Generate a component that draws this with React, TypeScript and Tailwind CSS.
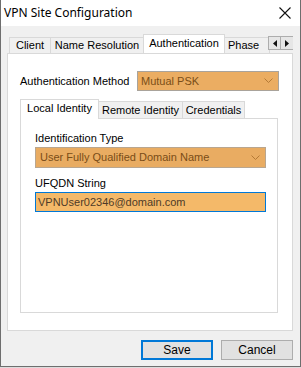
import React from "react";

const ui = { fontFamily: '"Liberation Sans", Arial, sans-serif' };

function Chevron({ color }: { color: string }) {
  return (
    <svg width="9" height="6" viewBox="0 0 9 6" className="shrink-0">
      <path d="M0.5 0.5 L4.5 4.5 L8.5 0.5" fill="none" stroke={color} strokeWidth="1" />
    </svg>
  );
}

export default function App() {
  const outerTabs = [
    { name: "Client", w: "w-[41px]" },
    { name: "Name Resolution", w: "w-[93px]" },
  ];

  return (
    <div className="w-[301px] h-[368px] bg-[#dcdcdc] overflow-hidden" style={ui}>
      <div className="w-[301px] h-[367px] flex flex-col bg-[#f0f0f0] border-x border-b border-[#6e6e6e] text-[11px] text-black">
        {/* Title bar */}
        <div className="h-[26px] bg-white flex items-center justify-between pl-[3px] pr-[9px] shrink-0">
          <span className="text-[12px]" style={{ fontFamily: '"Segoe UI", "Noto Sans", sans-serif' }}>
            VPN Site Configuration
          </span>
          <svg width="12" height="12" viewBox="0 0 12 12">
            <path d="M0.5 0.5 L11.5 11.5 M11.5 0.5 L0.5 11.5" stroke="#111" strokeWidth="1.1" />
          </svg>
        </div>

        {/* Body */}
        <div className="flex flex-col pt-[7px] px-[6px]">
          {/* Outer tab strip */}
          <div className="relative h-[20px] flex items-end pl-[2px] z-10 overflow-hidden w-[286px]">
            {outerTabs.map((t) => (
              <div
                key={t.name}
                className={`${t.w} h-[17px] shrink-0 border border-r-0 border-[#d9d9d9] bg-[#f0f0f0] flex items-center justify-center -mb-px`}
              >
                {t.name}
              </div>
            ))}
            <div className="w-[82px] h-[20px] shrink-0 border border-b-0 border-[#d9d9d9] bg-white flex items-center justify-center pb-[3px] -mb-px">
              Authentication
            </div>
            <div className="w-[45px] h-[17px] shrink-0 border border-l-0 border-[#d9d9d9] bg-[#f0f0f0] flex items-center pl-[3px] -mb-px whitespace-nowrap">
              Phase
            </div>
            {/* scroll arrows */}
            <div className="absolute right-[-1px] top-[3px] flex">
              <div className="w-[13px] h-[14px] border border-[#adadad] bg-[#e6e6e6] flex items-center justify-center">
                <svg width="4" height="7" viewBox="0 0 4 7">
                  <path d="M4 0 L0 3.5 L4 7 Z" fill="#111" />
                </svg>
              </div>
              <div className="w-[13px] h-[14px] border border-l-0 border-[#adadad] bg-[#e6e6e6] flex items-center justify-center">
                <svg width="4" height="7" viewBox="0 0 4 7">
                  <path d="M0 0 L4 3.5 L0 7 Z" fill="#111" />
                </svg>
              </div>
            </div>
          </div>

          {/* Outer panel */}
          <div className="h-[278px] w-[286px] bg-white border border-[#d9d9d9] flex flex-col pt-[17px] pl-[12px]">
            <div className="flex items-center h-[20px]">
              <span className="w-[117px]">Authentication Method</span>
              <div className="w-[142px] h-[20px] bg-[#ebad62] border border-[#a9a39b] flex items-center justify-between pl-[3px] pr-[5px] text-[#7a4d17]">
                <span>Mutual PSK</span>
                <Chevron color="#b47a36" />
              </div>
            </div>

            {/* Inner tab strip */}
            <div className="flex items-end h-[20px] mt-[7px] relative z-10">
              <div className="w-[79px] h-[20px] border border-b-0 border-[#d9d9d9] bg-white flex items-center justify-center pb-[3px] -mb-px">
                Local Identity
              </div>
              <div className="w-[84px] h-[18px] border border-l-0 border-[#d9d9d9] bg-[#f0f0f0] flex items-center justify-center -mb-px">
                Remote Identity
              </div>
              <div className="w-[62px] h-[18px] border border-l-0 border-[#d9d9d9] bg-[#f0f0f0] flex items-center justify-center -mb-px">
                Credentials
              </div>
            </div>

            {/* Inner panel */}
            <div className="w-[258px] h-[195px] border border-[#d9d9d9] bg-white flex flex-col pl-[14px] pt-[13px]">
              <span className="leading-[13px]">Identification Type</span>
              <div className="w-[231px] h-[21px] mt-[2px] bg-[#e9ac62] border border-[#b9a68f] flex items-center justify-between pl-[4px] pr-[5px] text-[#7a4d17]">
                <span>User Fully Qualified Domain Name</span>
                <Chevron color="#b47a36" />
              </div>
              <span className="leading-[13px] mt-[9px]">UFQDN String</span>
              <div className="w-[231px] h-[20px] mt-[2px] bg-[#f4b969] border border-[#0078d7] flex items-center pl-[2px] text-[#4f3b28]">
                VPNUser02346@domain.com
              </div>
            </div>
          </div>

          {/* Buttons */}
          <div className="flex justify-end gap-[8px] mt-[9px] w-[286px]">
            <button className="w-[72px] h-[20px] bg-[#e1e1e1] border-2 border-[#0078d7] text-[12px] flex items-center justify-center">
              Save
            </button>
            <button className="w-[72px] h-[20px] bg-[#e1e1e1] border border-[#adadad] text-[12px] flex items-center justify-center">
              Cancel
            </button>
          </div>
        </div>
      </div>
    </div>
  );
}
